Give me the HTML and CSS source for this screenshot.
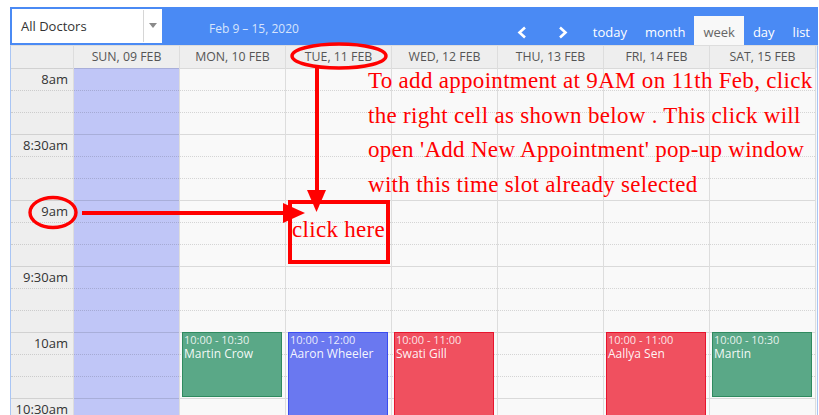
FILE: index.html
```html
<!DOCTYPE html>
<html lang="en">
<head>
<meta charset="utf-8">
<title>Appointments – Week</title>
<link rel="stylesheet" href="styles.css">
</head>
<body>
<div class="page">
  <div class="cal">
    <div class="toolbar">
      <div class="doctor-select">
        <span class="ds-label">All Doctors</span>
        <span class="ds-arrow"></span>
      </div>
      <div class="range-title">Feb 9 – 15, 2020</div>
      <div class="nav">
        <button class="nav-btn icon" type="button" aria-label="prev">
          <svg width="10" height="13" viewBox="0 0 10 13"><polyline points="8,1.5 2.5,6.5 8,11.5" fill="none" stroke="#fff" stroke-width="2.6"/></svg>
        </button>
        <button class="nav-btn icon" type="button" aria-label="next">
          <svg width="10" height="13" viewBox="0 0 10 13"><polyline points="2,1.5 7.5,6.5 2,11.5" fill="none" stroke="#fff" stroke-width="2.6"/></svg>
        </button>
        <button class="nav-btn" type="button">today</button>
        <button class="nav-btn" type="button">month</button>
        <button class="nav-btn active" type="button">week</button>
        <button class="nav-btn" type="button">day</button>
        <button class="nav-btn last" type="button">list</button>
      </div>
    </div>

    <div class="head-row">
      <div class="head-gutter"></div>
      <div class="head-cell">Sun, 09 Feb</div>
      <div class="head-cell">Mon, 10 Feb</div>
      <div class="head-cell">Tue, 11 Feb</div>
      <div class="head-cell">Wed, 12 Feb</div>
      <div class="head-cell">Thu, 13 Feb</div>
      <div class="head-cell">Fri, 14 Feb</div>
      <div class="head-cell">Sat, 15 Feb</div>
      <div class="head-end"></div>
    </div>

    <div class="grid">
      <div class="col gutter">
        <div class="slot major">8am</div><div class="slot"></div><div class="slot"></div>
        <div class="slot major">8:30am</div><div class="slot"></div><div class="slot"></div>
        <div class="slot major">9am</div><div class="slot"></div><div class="slot"></div>
        <div class="slot major">9:30am</div><div class="slot"></div><div class="slot"></div>
        <div class="slot major">10am</div><div class="slot"></div><div class="slot"></div>
        <div class="slot major">10:30am</div>
      </div>

      <div class="col day sun">
        <div class="slot major"></div><div class="slot"></div><div class="slot"></div>
        <div class="slot major"></div><div class="slot"></div><div class="slot"></div>
        <div class="slot major"></div><div class="slot"></div><div class="slot"></div>
        <div class="slot major"></div><div class="slot"></div><div class="slot"></div>
        <div class="slot major"></div><div class="slot"></div><div class="slot"></div>
        <div class="slot major"></div>
      </div>

      <div class="col day">
        <div class="slot major"></div><div class="slot"></div><div class="slot"></div>
        <div class="slot major"></div><div class="slot"></div><div class="slot"></div>
        <div class="slot major"></div><div class="slot"></div><div class="slot"></div>
        <div class="slot major"></div><div class="slot"></div><div class="slot"></div>
        <div class="slot major"></div><div class="slot"></div><div class="slot"></div>
        <div class="slot major"></div>
        <div class="event green"><div class="ev-time">10:00 - 10:30</div><div class="ev-name">Martin Crow</div></div>
      </div>

      <div class="col day">
        <div class="slot major"></div><div class="slot"></div><div class="slot"></div>
        <div class="slot major"></div><div class="slot"></div><div class="slot"></div>
        <div class="slot major"></div><div class="slot"></div><div class="slot"></div>
        <div class="slot major"></div><div class="slot"></div><div class="slot"></div>
        <div class="slot major"></div><div class="slot"></div><div class="slot"></div>
        <div class="slot major"></div>
        <div class="event blue long"><div class="ev-time">10:00 - 12:00</div><div class="ev-name">Aaron Wheeler</div></div>
      </div>

      <div class="col day">
        <div class="slot major"></div><div class="slot"></div><div class="slot"></div>
        <div class="slot major"></div><div class="slot"></div><div class="slot"></div>
        <div class="slot major"></div><div class="slot"></div><div class="slot"></div>
        <div class="slot major"></div><div class="slot"></div><div class="slot"></div>
        <div class="slot major"></div><div class="slot"></div><div class="slot"></div>
        <div class="slot major"></div>
        <div class="event red long"><div class="ev-time">10:00 - 11:00</div><div class="ev-name">Swati Gill</div></div>
      </div>

      <div class="col day">
        <div class="slot major"></div><div class="slot"></div><div class="slot"></div>
        <div class="slot major"></div><div class="slot"></div><div class="slot"></div>
        <div class="slot major"></div><div class="slot"></div><div class="slot"></div>
        <div class="slot major"></div><div class="slot"></div><div class="slot"></div>
        <div class="slot major"></div><div class="slot"></div><div class="slot"></div>
        <div class="slot major"></div>
      </div>

      <div class="col day">
        <div class="slot major"></div><div class="slot"></div><div class="slot"></div>
        <div class="slot major"></div><div class="slot"></div><div class="slot"></div>
        <div class="slot major"></div><div class="slot"></div><div class="slot"></div>
        <div class="slot major"></div><div class="slot"></div><div class="slot"></div>
        <div class="slot major"></div><div class="slot"></div><div class="slot"></div>
        <div class="slot major"></div>
        <div class="event red long"><div class="ev-time">10:00 - 11:00</div><div class="ev-name">Aallya Sen</div></div>
      </div>

      <div class="col day">
        <div class="slot major"></div><div class="slot"></div><div class="slot"></div>
        <div class="slot major"></div><div class="slot"></div><div class="slot"></div>
        <div class="slot major"></div><div class="slot"></div><div class="slot"></div>
        <div class="slot major"></div><div class="slot"></div><div class="slot"></div>
        <div class="slot major"></div><div class="slot"></div><div class="slot"></div>
        <div class="slot major"></div>
        <div class="event green"><div class="ev-time">10:00 - 10:30</div><div class="ev-name">Martin</div></div>
      </div>

      <div class="col end"></div>
    </div>
  </div>

  <!-- hand-drawn help marks over the calendar -->
  <svg class="marks" width="819" height="415" viewBox="0 0 819 415">
    <g fill="none" stroke="#f00">
      <ellipse cx="339" cy="56" rx="47" ry="12" stroke-width="3.4"/>
      <ellipse cx="53" cy="212.5" rx="23" ry="15" stroke-width="3.4"/>
      <line x1="82" y1="213" x2="286" y2="213" stroke-width="4"/>
      <line x1="317" y1="68" x2="317" y2="192" stroke-width="4"/>
      <rect x="290" y="202" width="98" height="60" stroke-width="4"/>
    </g>
    <g fill="#f00">
      <polygon points="283,203 305,213 283,223"/>
      <polygon points="307,190 326,190 316.5,212"/>
    </g>
  </svg>
  <p class="note">To add appointment at 9AM on 11th Feb, click<br>the right cell as shown below . This click will<br>open 'Add New Appointment' pop-up window<br>with this time slot already selected</p>
  <p class="note-click">click here</p>
</div>
</body>
</html>
```

FILE: styles.css
```css
* { box-sizing: border-box; }

html, body {
  margin: 0;
  background: #fff;
  overflow: hidden;
}

body {
  font-family: "Open Sans", "Liberation Sans", sans-serif;
  color: #333;
}

.page {
  position: relative;
  width: 819px;
  height: 415px;
  overflow: hidden;
}

.cal {
  margin: 7px 0 0 10px;
  width: 808px;
}

/* ---------- toolbar ---------- */
.toolbar {
  display: flex;
  height: 38px;
  background: #4a8af4;
}

.doctor-select {
  display: flex;
  align-items: center;
  width: 150px;
  height: 34px;
  margin: 2px 0 0 2px;
  background: #fff;
  position: relative;
}

.ds-label {
  padding-left: 9px;
  font-size: 13px;
  color: #333;
  flex: 1;
}

.ds-arrow {
  width: 19px;
  height: 32px;
  border-left: 1px solid #d6d6d6;
  position: relative;
}

.ds-arrow::after {
  content: "";
  position: absolute;
  left: 5px;
  top: 13px;
  border-left: 4px solid transparent;
  border-right: 4px solid transparent;
  border-top: 5px solid #8a8a8a;
}

.range-title {
  margin-left: 47px;
  padding-top: 13px;
  font-size: 12px;
  color: #d6e4fc;
  white-space: nowrap;
}

.nav {
  margin-left: auto;
  align-self: flex-end;
  display: flex;
  height: 29px;
}

.nav-btn {
  border: 0;
  margin: 0;
  background: transparent;
  color: #fff;
  font-family: "Open Sans", "Liberation Sans", sans-serif;
  font-size: 13px;
  line-height: 29px;
  height: 29px;
  padding: 2px 9px 0;
  cursor: pointer;
}

.nav-btn.icon {
  width: 41px;
  padding: 4px 0 0;
  display: flex;
  justify-content: center;
  align-items: center;
}

.nav-btn.active {
  background: #f8f8f8;
  color: #666;
}

.nav-btn.last {
  padding-right: 8px;
}

/* ---------- day header ---------- */
.head-row,
.grid {
  display: grid;
  grid-template-columns: 62px repeat(7, 106px) 1fr;
  border-left: 1px solid #a9c5f4;
  border-right: 1px solid #a9c5f4;
}

.head-row {
  height: 23px;
  background: #eee;
  border-top: 1px solid #ddd;
}

.head-cell {
  border-left: 1px solid #ddd;
  text-align: center;
  text-transform: uppercase;
  font-size: 12.3px;
  line-height: 22px;
  color: #555;
  white-space: nowrap;
}

.head-end {
  border-left: 1px solid #ddd;
}

/* ---------- time grid ---------- */
.grid {
  height: 360px;
}

.col {
  position: relative;
  display: flex;
  flex-direction: column;
}

.col.day {
  background: #f9f9f9;
  border-left: 1px solid #ddd;
}

.col.sun {
  background: #c0c6f7;
}

.col.end {
  background: #f9f9f9;
  border-left: 1px solid #ddd;
}

.gutter {
  background: #eee;
}

.slot {
  height: 22px;
  flex: none;
  border-top: 1px dotted rgba(0, 0, 0, 0.14);
}

.slot.major {
  border-top: 1px solid rgba(0, 0, 0, 0.12);
}

.gutter .slot {
  text-align: right;
  padding-right: 5px;
  font-size: 13px;
  line-height: 21px;
  color: #333;
  white-space: nowrap;
}

/* ---------- appointments ---------- */
.event {
  position: absolute;
  top: 264px;
  left: 2px;
  width: 100px;
  height: 65px;
  border: 1px solid;
  padding: 0 1px;
  color: #fff;
  overflow: hidden;
}

.event.long {
  height: 140px;
}

.ev-time {
  font-size: 11px;
  line-height: 14px;
  color: rgba(255, 255, 255, 0.86);
  white-space: nowrap;
}

.ev-name {
  font-size: 12px;
  line-height: 14px;
  color: rgba(255, 255, 255, 0.94);
  white-space: nowrap;
}

.event.green {
  background: #5aa887;
  border-color: #2f8a5f;
}

.event.blue {
  background: #6a78f0;
  border-color: #3a4cf0;
}

.event.red {
  background: #f0505f;
  border-color: #e8142d;
}

/* ---------- help annotations ---------- */
.marks {
  position: absolute;
  left: 0;
  top: 0;
}

.note,
.note-click {
  position: absolute;
  margin: 0;
  font-family: "Liberation Serif", "Times New Roman", serif;
  font-size: 23px;
  letter-spacing: 0.3px;
  color: #f00;
  white-space: nowrap;
  line-height: 34.7px;
}

.note {
  left: 368px;
  top: 64px;
}

.note-click {
  left: 292px;
  top: 213px;
}
```
